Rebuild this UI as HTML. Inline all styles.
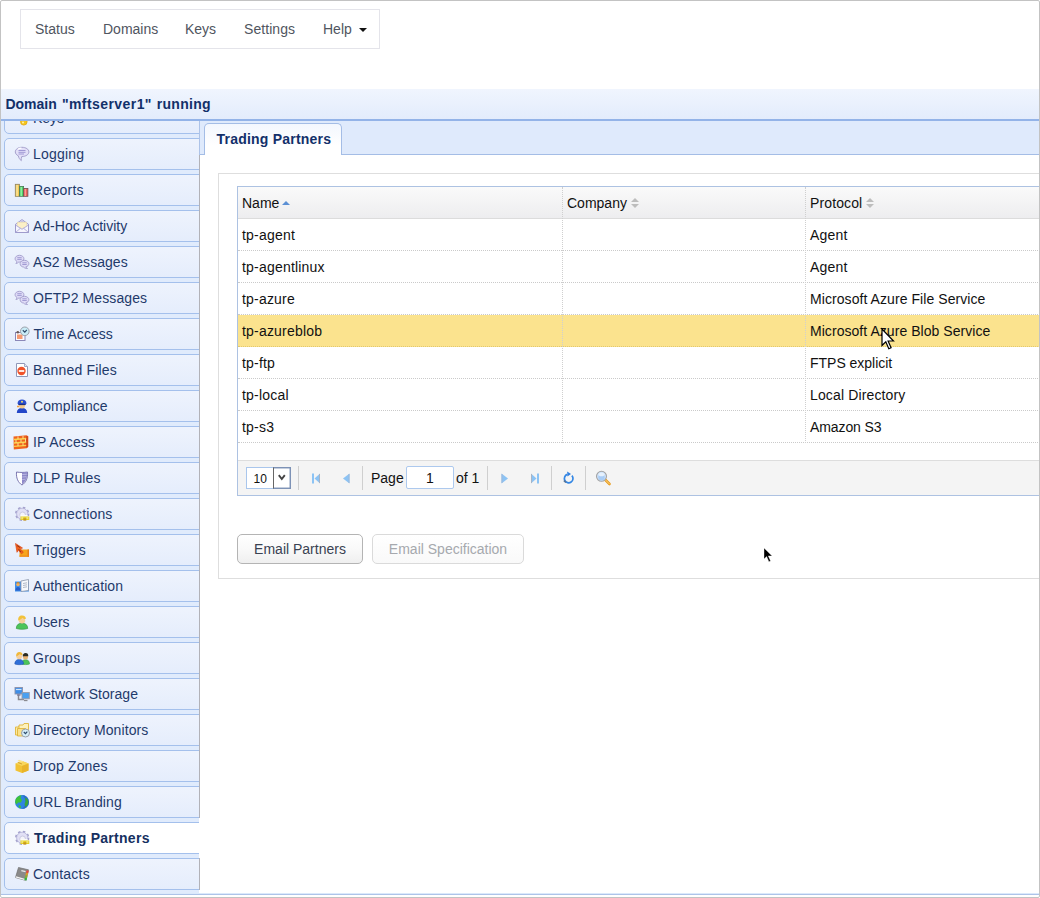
<!DOCTYPE html>
<html lang="en">
<head>
<meta charset="utf-8">
<title>Trading Partners</title>
<style>
*{box-sizing:border-box;margin:0;padding:0}
html,body{width:1040px;height:898px;overflow:hidden;background:#fff}
body{position:relative;font-family:"Liberation Sans",Arial,Helvetica,sans-serif;font-size:14px;line-height:20px;color:#111}
#frame{position:absolute;left:0;top:0;width:1040px;height:898px;border:1px solid #c3c3c3;border-radius:2px;z-index:50;pointer-events:none}
#nav{position:absolute;left:20px;top:9px;width:360px;height:40px;border:1px solid #e4e4ea;background:#fff;white-space:nowrap}
#nav a{position:absolute;top:9px;color:#505560;text-decoration:none;line-height:20px}
#nav .caret{display:inline-block;width:0;height:0;margin-left:3px;vertical-align:middle;border-top:4px solid #111;border-left:4px solid transparent;border-right:4px solid transparent;position:relative;top:-.5px}
#hdr{position:absolute;left:1px;top:89px;width:1038px;height:30px;background:linear-gradient(#f0f5fe,#e3ecfc)}
#hdr span{position:absolute;left:4px;top:5px;font-weight:bold;color:#12306a;line-height:20px;letter-spacing:.38px;white-space:nowrap}
#hline{position:absolute;left:1px;top:119px;width:1038px;height:2px;background:#93b3e8}
#side{position:absolute;left:1px;top:121px;width:198px;height:772px;background:#e0ebfc;overflow:hidden}
.it{position:absolute;left:3px;width:199px;height:32px;border:1px solid #a4c0ec;border-radius:5px 0 0 5px;background:linear-gradient(#eef3fd,#e5edfc);color:#1f3a6b}
.it span{position:absolute;top:5px;line-height:20px;white-space:nowrap}
.ic{position:absolute;overflow:visible}
.it.sel{background:linear-gradient(to right,#f4f7fd,#fff 45%);font-weight:bold;color:#15305f}
#selcover{position:absolute;left:199px;top:823px;width:2px;height:30px;background:#fff}
.vl{position:absolute;left:199px;width:1px}
#strip{position:absolute;left:200px;top:121px;width:839px;height:33px;background:#dfeafc}
#stripline{position:absolute;left:200px;top:154px;width:839px;height:1px;background:#a4bde6}
#tab{position:absolute;left:204px;top:123px;width:138px;height:32px;border:1px solid #a4bde6;border-bottom:0;border-radius:5px 5px 0 0;background:linear-gradient(#f3f7fe,#fff 70%)}
#tab span{position:absolute;left:11.500px;top:5px;font-weight:bold;color:#12306a;line-height:20px;white-space:nowrap;letter-spacing:.22px}
#box{position:absolute;left:218px;top:173px;width:830px;height:406px;border:1px solid #dedede;background:#fff}
#grid{position:absolute;left:237px;top:186px;width:810px;height:310px;border:1px solid #adc2e2;background:#fff}
#ghead{position:absolute;left:0;top:0;width:808px;height:32px;background:linear-gradient(#fafafa,#ededef);border-bottom:1px solid #dcdcdc}
.th{position:absolute;top:6px;line-height:20px;color:#111;white-space:nowrap}
.row{position:absolute;left:0;width:808px;height:32px;border-bottom:1px dotted #cacaca}
.row.hl{background:#fbe38e;border-bottom-color:#e3c96f}
.row span{position:absolute;top:6px;line-height:20px;white-space:nowrap;color:#111}
.c1{left:4px}.c3{left:572px}
.vd{position:absolute;top:0;width:0;height:256px;border-left:1px dotted #cfcfcf}
#pager{position:absolute;left:0;top:273px;width:808px;height:35px;background:#f4f4f4;border-top:1px solid #ddd}
.sep{position:absolute;top:5px;width:1px;height:24px;background:#cfcfcf}
#sel{position:absolute;left:8px;top:6px;width:45px;height:22px;border:1px solid #a9c6ec;background:#fff;font-size:12px;line-height:20px}
#sel span{position:absolute;left:6.500px;top:1px}
#sel i{position:absolute;right:-1px;top:-1px;width:18px;height:22px;border:1px solid #7d92b6;border-left-color:#666;background:#fff;box-shadow:inset -1px 0 0 rgba(125,146,182,.45),inset 0 1px 0 rgba(125,146,182,.45),inset 0 -1px 0 rgba(125,146,182,.45)}
#pg{position:absolute;left:168px;top:5px;width:48px;height:23px;border:1px solid #adc9ee;border-radius:2px;background:#fff;text-align:center;line-height:23px}
.pt{position:absolute;top:7px;line-height:20px;white-space:nowrap}
.btn{position:absolute;top:534px;height:30px;border:1px solid #b4b4b4;border-radius:5px;background:linear-gradient(#fff,#f9f9f9 50%,#efefef);color:#3a4252;text-align:center;line-height:28px;white-space:nowrap}
.btn.dis{color:#a6a9ae;border-color:#dadada;background:linear-gradient(#fff,#f9f9f9)}
#bottomline{position:absolute;left:1px;top:893px;width:1038px;height:2px;background:linear-gradient(#dbe9fb 50%,#adc3e8 50%)}
.cur{position:absolute;overflow:visible;z-index:40}
</style>
</head>
<body>
<div id="nav">
  <a style="left:14px">Status</a>
  <a style="left:82px">Domains</a>
  <a style="left:164px">Keys</a>
  <a style="left:223px;letter-spacing:.06px">Settings</a>
  <a style="left:302px">Help <b class="caret"></b></a>
</div>
<div id="hdr"><span style="left:4.400px;letter-spacing:0">Domain</span> <span style="left:60.900px;letter-spacing:.43px">"mftserver1"</span> <span style="left:155.700px;letter-spacing:.3px">running</span></div>
<div id="side">
<div class="it" style="top:-19px"><svg class="ic" style="left:9px;top:7px" width="16" height="16" viewBox="0 0 16 16"><path d="M12.500 1.500L7 8" stroke="#d9a520" stroke-width="2"/><circle cx="9.800" cy="11.800" r="3.300" fill="#f6c61c" stroke="#e0a818" stroke-width=".8"/><circle cx="9" cy="12.500" r="1" fill="#fdf0b0"/></svg><span style="left:28px;letter-spacing:0px">Keys</span></div>
<div class="it" style="top:17px"><svg class="ic" style="left:9px;top:7px" width="16" height="16" viewBox="0 0 16 16"><path d="M8 1.300C4.200 1.300 1.300 3.300 1.300 5.900c0 1.700 1.200 3.100 3 3.900.3 1.900 1.500 3.700 3 4.900-.2-1.400-.1-2.800.5-4.200H8c3.800 0 6.900-2 6.900-4.600S11.800 1.300 8 1.300z" fill="#e2dff8" stroke="#a6a1cc" stroke-width="1"/><path d="M4 3.300c1-.8 2.300-1.200 3.500-1.200" fill="none" stroke="#fff" stroke-width="1.200"/><path d="M4.500 4.500h7M4.500 6.300h7M4.500 8h5.500" stroke="#a098d4" stroke-width="1"/></svg><span style="left:28px;letter-spacing:0.2px">Logging</span></div>
<div class="it" style="top:53px"><svg class="ic" style="left:9px;top:7px" width="16" height="16" viewBox="0 0 16 16"><rect x="1.300" y="2.300" width="4.200" height="12" fill="#f4c850" stroke="#8a8060" stroke-width=".8"/><rect x="2.300" y="3" width="1.500" height="11" fill="#fbe49a"/><rect x="5.600" y="4.400" width="4" height="9.900" fill="#4fd468" stroke="#4a7a58" stroke-width=".8"/><rect x="6.500" y="5" width="1.500" height="9" fill="#8eeaa0"/><rect x="9.700" y="6.400" width="4.200" height="7.900" fill="#ee5e58" stroke="#6a5050" stroke-width=".8"/><rect x="10.600" y="7" width="1.500" height="7" fill="#f89a96"/></svg><span style="left:28px;letter-spacing:0.25px">Reports</span></div>
<div class="it" style="top:89px"><svg class="ic" style="left:9px;top:7px" width="16" height="16" viewBox="0 0 16 16"><path d="M1.500 6.300L8 1.600l6.500 4.700v8.200h-13z" fill="#eeedfb" stroke="#9f9bcc" stroke-width="1"/><path d="M2 6.300L8 2.200l6 4.100z" fill="#c9c6e6"/><path d="M3.300 4.300h9.400v4.200L8 11 3.300 8.500z" fill="#fcf0c6" stroke="#ead9a0" stroke-width=".5"/><path d="M1.500 7l6.500 4.300L14.500 7v7.500h-13z" fill="#f6f5fd"/><path d="M1.500 7l6.500 4.300L14.500 7M1.500 14.500l5-4.300M14.500 14.500l-5-4.300" fill="none" stroke="#aeaad8" stroke-width=".9"/><path d="M1.500 6.500v8h13v-8" fill="none" stroke="#9f9bcc" stroke-width="1"/></svg><span style="left:28px;letter-spacing:0px">Ad-Hoc Activity</span></div>
<div class="it" style="top:125px"><svg class="ic" style="left:9px;top:7px" width="16" height="16" viewBox="0 0 16 16"><path d="M5.500 1.300c-2.500 0-4.400 1.500-4.400 3.400 0 1.100.7 2.100 1.800 2.700-.1.800-.5 1.500-1 2.100 1.200-.1 2.200-.7 2.900-1.500.2 0 .5.100.7.100 2.500 0 4.400-1.500 4.400-3.400S8 1.300 5.500 1.300z" fill="#dedbf6" stroke="#a19ccb" stroke-width=".9"/><path d="M3.300 3.700h4.400M3.300 5.400h4.400" stroke="#9a93cf" stroke-width=".9"/><path d="M10.500 6.300c2.400 0 4.400 1.500 4.400 3.400 0 1.500-1.300 2.800-3.100 3.200.3.700.9 1.300 1.700 1.600-1.500.2-2.900-.3-3.800-1.400-2-.2-3.600-1.600-3.600-3.400 0-1.900 2-3.400 4.400-3.400z" fill="#dedbf6" stroke="#a19ccb" stroke-width=".9"/><path d="M8.300 8.800h4.400M8.300 10.500h4.400" stroke="#9a93cf" stroke-width=".9"/></svg><span style="left:28px;letter-spacing:0.05px">AS2 Messages</span></div>
<div class="it" style="top:161px"><svg class="ic" style="left:9px;top:7px" width="16" height="16" viewBox="0 0 16 16"><path d="M5.500 1.300c-2.500 0-4.400 1.500-4.400 3.400 0 1.100.7 2.100 1.800 2.700-.1.800-.5 1.500-1 2.100 1.200-.1 2.200-.7 2.900-1.500.2 0 .5.100.7.100 2.500 0 4.400-1.500 4.400-3.400S8 1.300 5.500 1.300z" fill="#dedbf6" stroke="#a19ccb" stroke-width=".9"/><path d="M3.300 3.700h4.400M3.300 5.400h4.400" stroke="#9a93cf" stroke-width=".9"/><path d="M10.500 6.300c2.400 0 4.400 1.500 4.400 3.400 0 1.500-1.300 2.800-3.100 3.200.3.700.9 1.300 1.700 1.600-1.500.2-2.900-.3-3.800-1.400-2-.2-3.600-1.600-3.600-3.400 0-1.900 2-3.400 4.400-3.400z" fill="#dedbf6" stroke="#a19ccb" stroke-width=".9"/><path d="M8.300 8.800h4.400M8.300 10.500h4.400" stroke="#9a93cf" stroke-width=".9"/></svg><span style="left:28px;letter-spacing:0.1px">OFTP2 Messages</span></div>
<div class="it" style="top:197px"><svg class="ic" style="left:9px;top:7px" width="16" height="16" viewBox="0 0 16 16"><rect x="1.500" y="6.500" width="9.500" height="8" fill="#fbfbff" stroke="#8b88b8" stroke-width="1"/><rect x="3" y="8.500" width="5.500" height="4.500" fill="#f59a72"/><circle cx="3.800" cy="6.300" r="1.300" fill="#6a5a58"/><circle cx="10.800" cy="5.300" r="4.300" fill="#c9ecf7" stroke="#9aa0a8" stroke-width="1"/><path d="M8.800 4.300l2 1.800 2-2.300" fill="none" stroke="#2d4a6a" stroke-width="1.200"/></svg><span style="left:28.5px;letter-spacing:0.05px">Time Access</span></div>
<div class="it" style="top:233px"><svg class="ic" style="left:9px;top:7px" width="16" height="16" viewBox="0 0 16 16"><path d="M2.500 1.500h8l3 3v10h-11z" fill="#fff" stroke="#8f97b8" stroke-width="1"/><path d="M10.500 1.500v3h3" fill="#dfe6f6" stroke="#8f97b8" stroke-width=".8"/><circle cx="7.500" cy="9" r="4.200" fill="#f0522a"/><rect x="4.800" y="8" width="5.400" height="2" fill="#fde8e0"/></svg><span style="left:28px;letter-spacing:0.18px">Banned Files</span></div>
<div class="it" style="top:269px"><svg class="ic" style="left:9px;top:7px" width="16" height="16" viewBox="0 0 16 16"><path d="M2.800 15c0-3.200 2-5 5.200-5s5.200 1.800 5.200 5z" fill="#2346c8"/><circle cx="8" cy="7.500" r="3" fill="#f3c98b"/><path d="M3.500 5.500c0-2.500 2-4 4.500-4s4.500 1.500 4.500 4l-1 1.200h-7z" fill="#2a4fd0"/><rect x="4.500" y="5.800" width="7" height="1.300" fill="#1c2f80"/><circle cx="8" cy="3.800" r="1" fill="#f2dc6a"/><path d="M3 8.500l2 0" stroke="#f0a040" stroke-width="1.500"/></svg><span style="left:28px;letter-spacing:0.08px">Compliance</span></div>
<div class="it" style="top:305px"><svg class="ic" style="left:8px;top:7px" width="16" height="16" viewBox="0 0 16 16"><path d="M0.500 2.500l13-1.300 1.800 1v10.500l-1.500 1.500-13 1.300z" fill="#f0641e"/><path d="M1 5.500l13-1M1 9l13-1M1 12.300l13-1" stroke="#fbd24a" stroke-width="1.300"/><path d="M5 2.300v2.800M10 1.800v2.800M3 5.800v3M8 5.300v3M12.500 4.800v3M5 9v3M10 8.500v3" stroke="#fce9a0" stroke-width=".9"/><path d="M14 2.200v11" stroke="#c8401a" stroke-width="1.500"/></svg><span style="left:28px;letter-spacing:0.08px">IP Access</span></div>
<div class="it" style="top:341px"><svg class="ic" style="left:9px;top:7px" width="16" height="16" viewBox="0 0 16 16"><path d="M2.500 2c3.500.6 7.500.6 11 0 .5 6-1.500 10.500-5.500 13C4 12.500 2 8 2.500 2z" fill="#fdfdff" stroke="#7c78b0" stroke-width="1"/><path d="M8 2.500c2 0 4-.1 5.300-.4.300 5.500-1.500 9.600-5.300 12.200z" fill="#8d88c8"/><path d="M8.200 4.500l4.600-.3M8.200 7l4.200-.3M8.200 9.500l3.200-.3" stroke="#c2bfe6" stroke-width=".9"/></svg><span style="left:28px;letter-spacing:0.1px">DLP Rules</span></div>
<div class="it" style="top:377px"><svg class="ic" style="left:9px;top:7px" width="16" height="16" viewBox="0 0 16 16"><circle cx="8.200" cy="7.800" r="6.300" fill="none" stroke="#a3a1cc" stroke-width="1.700" stroke-dasharray="2.470 2.470"/><circle cx="8.200" cy="7.800" r="5.600" fill="#e1e0f5" stroke="#b0aed6" stroke-width=".8"/><circle cx="8.600" cy="8.800" r="2.800" fill="#f4f4fa" stroke="#c2c1da" stroke-width=".8"/><path d="M6.500 9h6.500l2.300 1.700H6.500z" fill="#fbfbf4"/><path d="M6.500 10.500h8.800v3.500H6.500z" fill="#e6d028"/><path d="M7.300 11.300h2v1.500h-2zM12.300 11.300h2v1.500h-2z" fill="#f6ec8a"/><path d="M9.300 12.300h3v2.300h-3z" fill="#c8961a"/></svg><span style="left:28px;letter-spacing:0.15px">Connections</span></div>
<div class="it" style="top:413px"><svg class="ic" style="left:9px;top:7px" width="16" height="16" viewBox="0 0 16 16"><path d="M5.500 7.500h9.500v7.200H5.500z" fill="#f7a51c"/><path d="M13.500 7.500h1.500v7.200h-1.500z" fill="#e5801a"/><path d="M5.500 13.500h9.500v1.200H5.500z" fill="#f08a18"/><path d="M1.500 1.500l7 4.500-2.200.8 3 3.500-1.800 1.500-3-3.500-1.500 2z" fill="#f0601a" stroke="#d8481a" stroke-width=".7"/><path d="M3 3.500l3 2M4.500 7l2.500 3" stroke="#8a2f18" stroke-width=".9"/></svg><span style="left:28.5px;letter-spacing:0.2px">Triggers</span></div>
<div class="it" style="top:449px"><svg class="ic" style="left:9px;top:7px" width="16" height="16" viewBox="0 0 16 16"><path d="M1 3.500h14v10H1z" fill="#3f8ee8"/><path d="M7 3l7.500-1.500v11L7 13.500z" fill="#f7f9fc" stroke="#8a96aa" stroke-width=".8"/><path d="M9 5.500l4-.7M9 7.500l4-.7M9 9.500l4-.7" stroke="#a8b0c0" stroke-width=".9"/><circle cx="4" cy="6.500" r="1.800" fill="#f3b060"/><path d="M1.500 12.500c0-2.200 1-3.500 2.500-3.500s2.500 1.300 2.500 3.500z" fill="#2a5fc8"/><path d="M2.800 4.800h2.500" stroke="#d88820" stroke-width="1.200"/></svg><span style="left:28px;letter-spacing:0.1px">Authentication</span></div>
<div class="it" style="top:485px"><svg class="ic" style="left:9px;top:7px" width="16" height="16" viewBox="0 0 16 16"><path d="M2.300 14.500c0-3.500 2.200-5.300 5.700-5.300s5.700 1.800 5.700 5.300c-3 1-8.400 1-11.400 0z" fill="#4cc45a" stroke="#3a9a48" stroke-width=".7"/><circle cx="8" cy="6.200" r="3.200" fill="#f6cf9a"/><path d="M4.300 6.500c-.5-3 1-5 3.700-5s4 1.500 3.800 3.500c-1.500.3-2.500-.3-3.300-1.300-.8 1.300-2.400 2-4.200 2.800z" fill="#f2c23a"/></svg><span style="left:28px;letter-spacing:0px">Users</span></div>
<div class="it" style="top:521px"><svg class="ic" style="left:9px;top:7px" width="16" height="16" viewBox="0 0 16 16"><path d="M7.500 14c0-2.800 1.500-4.300 4-4.300s4 1.500 4 4.300c-2 .8-6 .8-8 0z" fill="#4cc45a" stroke="#359a44" stroke-width=".6"/><circle cx="11.500" cy="7" r="2.500" fill="#e8b070"/><path d="M8.800 6.500c-.2-2.300 1-3.500 2.800-3.500s2.900 1.200 2.700 3.300c-1.800.2-3.500-.2-5.500.2z" fill="#2a2a22"/><path d="M.8 14c0-3 1.600-4.500 4.400-4.500s4.400 1.500 4.400 4.500c-2.300.9-6.500.9-8.800 0z" fill="#2f6fd8" stroke="#2254b0" stroke-width=".6"/><circle cx="5.200" cy="6.500" r="2.800" fill="#f6cf9a"/><path d="M2.200 6.500c-.4-2.800 1-4.500 3.200-4.500s3.400 1.300 3.200 3.200c-1.300.2-2.200-.3-2.900-1.100-.7 1.100-2 1.700-3.500 2.400z" fill="#f0b83a"/></svg><span style="left:28px;letter-spacing:0.25px">Groups</span></div>
<div class="it" style="top:557px"><svg class="ic" style="left:9px;top:7px" width="16" height="16" viewBox="0 0 16 16"><path d="M4.500 8.500v5h5.500" fill="none" stroke="#8a8a90" stroke-width="1.500"/><rect x="1" y="1.500" width="7.500" height="6.500" fill="#3f8ee8" stroke="#8f92a8" stroke-width=".9"/><path d="M2 3.500h5.500" stroke="#cfe4fb" stroke-width="1.200"/><path d="M3 9h3.500" stroke="#77779a" stroke-width="1.300"/><rect x="8" y="6.500" width="7.300" height="6.300" fill="#4aa0f0" stroke="#9a9ca8" stroke-width=".9"/><path d="M10 14.500h3.500" stroke="#8a8a90" stroke-width="1.300"/></svg><span style="left:28px;letter-spacing:0.05px">Network Storage</span></div>
<div class="it" style="top:593px"><svg class="ic" style="left:9px;top:7px" width="16" height="16" viewBox="0 0 16 16"><path d="M1.500 5h3l1-1.500h4v9.500h-8z" fill="#fbe9a0" stroke="#e0b63a" stroke-width=".9"/><path d="M5 3h4l1-1.500h4.500v11H5z" fill="#fdf1bb" stroke="#e0b63a" stroke-width=".9"/><path d="M3.500 6.500h8v7.500h-8z" fill="#fbe18a" stroke="#dcae30" stroke-width=".8"/><circle cx="11.500" cy="11" r="4" fill="#d6eef8" stroke="#9aa0a8" stroke-width="1"/><path d="M9.800 10l1.700 1.600 1.800-2" fill="none" stroke="#2d4a6a" stroke-width="1.200"/></svg><span style="left:28px;letter-spacing:0.1px">Directory Monitors</span></div>
<div class="it" style="top:629px"><svg class="ic" style="left:9px;top:7px" width="16" height="16" viewBox="0 0 16 16"><path d="M1.500 5.500L8 3l6.500 2.500v7L8 15l-6.500-2.500z" fill="#f2c234"/><path d="M1.500 5.500L8 8l6.500-2.500L8 3z" fill="#f8d65a"/><path d="M8 8v7l6.500-2.500v-7z" fill="#e9b42a"/><path d="M5 1.800l4.500 1.500-2 1.200L3.500 3z" fill="#fbe38a"/><path d="M4 4.500l4 1.500" stroke="#c8962a" stroke-width=".8"/></svg><span style="left:28px;letter-spacing:0.15px">Drop Zones</span></div>
<div class="it" style="top:665px"><svg class="ic" style="left:9px;top:7px" width="16" height="16" viewBox="0 0 16 16"><circle cx="8" cy="8" r="7" fill="#2f86e0"/><path d="M8 1a7 7 0 0 1 0 14 9 9 0 0 0 0-14z" fill="#2a6fc8"/><path d="M2 4.500c1.500-2 3.500-3.200 5.500-3.300L6.500 4l1.500 2-1 2.500H4L2.500 10.500 1.200 8.500c0-1.500.3-2.900.8-4z" fill="#3fc23a"/><path d="M11 3.500l2.500 1.500 1 3-1.300 3.500-1.700 1.500-1-3 1-2.500z" fill="#39a83a"/><path d="M5 11l2 1-.5 2.500-2-1.500z" fill="#3fc23a"/></svg><span style="left:28px;letter-spacing:0.12px">URL Branding</span></div>
<div class="it sel" style="top:701px"><svg class="ic" style="left:9px;top:7px" width="16" height="16" viewBox="0 0 16 16"><circle cx="8.200" cy="7.800" r="6.300" fill="none" stroke="#a3a1cc" stroke-width="1.700" stroke-dasharray="2.470 2.470"/><circle cx="8.200" cy="7.800" r="5.600" fill="#e1e0f5" stroke="#b0aed6" stroke-width=".8"/><circle cx="8.600" cy="8.800" r="2.800" fill="#f4f4fa" stroke="#c2c1da" stroke-width=".8"/><path d="M6.500 9h6.500l2.300 1.700H6.500z" fill="#fbfbf4"/><path d="M6.500 10.500h8.800v3.500H6.500z" fill="#e6d028"/><path d="M7.300 11.300h2v1.500h-2zM12.300 11.300h2v1.500h-2z" fill="#f6ec8a"/><path d="M9.300 12.300h3v2.300h-3z" fill="#c8961a"/></svg><span style="left:29px;letter-spacing:0.28px">Trading Partners</span></div>
<div class="it" style="top:737px"><svg class="ic" style="left:9px;top:7px" width="16" height="16" viewBox="0 0 16 16"><path d="M4.500 1.500l10 2.300-2.500 10.700-10.500-3z" fill="#8a8a8a" stroke="#6e6e6e" stroke-width=".7"/><path d="M1.500 11.500l10.500 3 .3-1.300-10.300-2.900z" fill="#f2f2f2"/><path d="M7.500 4l4.200.9-.3 1.400-4.200-1z" fill="#e8e8e8"/><path d="M12.600 4.300l2.200.5-.6 2.400-2.200-.5z" fill="#e8483a"/><path d="M12 6.800l2.200.5-.6 2.400-2.200-.5z" fill="#d89a2a"/><path d="M11.400 9.300l2.200.5-.6 2.300-2.200-.5z" fill="#8ab02a"/><path d="M10.800 11.700l2.200.5-.5 2.200-2.200-.5z" fill="#2fb83a"/></svg><span style="left:28px;letter-spacing:0.2px">Contacts</span></div>
</div>
<div id="hline"></div>
<div class="vl" style="top:121px;height:34px;background:#adc3e8"></div>
<div class="vl" style="top:155px;height:663px;background:#b2b2b8"></div>
<div class="vl" style="top:858px;height:32px;background:#b2b2b8"></div>
<div id="selcover"></div>
<div id="strip"></div><div id="stripline"></div>
<div id="tab"><span>Trading Partners</span></div>
<div id="box"></div>
<div id="grid">
  <div id="ghead">
    <span class="th" style="left:4px">Name</span>
    <svg class="ic" style="left:44px;top:14px" width="8" height="4" viewBox="0 0 8 4"><path d="M0 4L4 0l4 4z" fill="#5b8fd4"/></svg>
    <span class="th" style="left:329px">Company</span>
    <svg class="ic" style="left:393px;top:11px" width="8" height="10" viewBox="0 0 8 10"><path d="M0 4L4 0l4 4zM0 6h8L4 10z" fill="#bdbdbd"/></svg>
    <span class="th" style="left:572px;letter-spacing:.12px">Protocol</span>
    <svg class="ic" style="left:628px;top:11px" width="8" height="10" viewBox="0 0 8 10"><path d="M0 4L4 0l4 4zM0 6h8L4 10z" fill="#bdbdbd"/></svg>
  </div>
<div class="row" style="top:32px"><span class="c1" style="letter-spacing:0.2px">tp-agent</span><span class="c3" style="letter-spacing:0.2px">Agent</span></div>
<div class="row" style="top:64px"><span class="c1" style="letter-spacing:0.2px">tp-agentlinux</span><span class="c3" style="letter-spacing:0.2px">Agent</span></div>
<div class="row" style="top:96px"><span class="c1" style="letter-spacing:0.2px">tp-azure</span><span class="c3" style="letter-spacing:0.07px">Microsoft Azure File Service</span></div>
<div class="row hl" style="top:128px"><span class="c1" style="letter-spacing:0.2px">tp-azureblob</span><span class="c3" style="letter-spacing:0.05px">Microsoft Azure Blob Service</span></div>
<div class="row" style="top:160px"><span class="c1" style="letter-spacing:0.2px">tp-ftp</span><span class="c3" style="letter-spacing:-0.02px">FTPS explicit</span></div>
<div class="row" style="top:192px"><span class="c1" style="letter-spacing:0.2px">tp-local</span><span class="c3" style="letter-spacing:0.14px">Local Directory</span></div>
<div class="row" style="top:224px"><span class="c1" style="letter-spacing:0.2px">tp-s3</span><span class="c3" style="letter-spacing:-0.1px">Amazon S3</span></div>
  <div class="vd" style="left:324px"></div>
  <div class="vd" style="left:567px"></div>
  <div id="pager">
    <div id="sel"><span>10</span><i><svg class="ic" style="left:4px;top:6px" width="8" height="7" viewBox="0 0 8 7"><path d="M.8 1.200l3 3.800 3-3.800" fill="none" stroke="#444" stroke-width="1.900"/></svg></i></div>
    <div class="sep" style="left:60px"></div>
    <svg class="ic" style="left:73px;top:12px" width="10" height="11" viewBox="0 0 10 11"><path d="M1 .5h2v10H1z" fill="#8cc3f4"/><path d="M9 .5v10L3.500 5.500z" fill="#8cc3f4"/><path d="M8.500 1v9" stroke="#a9b4c4" stroke-width="1"/></svg>
    <svg class="ic" style="left:104px;top:12px" width="8" height="11" viewBox="0 0 8 11"><path d="M7.500 .5v10L1 5.500z" fill="#8cc3f4"/><path d="M7 1v9" stroke="#9fb8d8" stroke-width="1"/></svg>
    <div class="sep" style="left:124px"></div>
    <span class="pt" style="left:133px">Page</span>
    <div id="pg">1</div>
    <span class="pt" style="left:218px">of 1</span>
    <div class="sep" style="left:249px"></div>
    <svg class="ic" style="left:263px;top:12px" width="8" height="11" viewBox="0 0 8 11"><path d="M.5 .5v10L7 5.500z" fill="#8cc3f4"/><path d="M1 1v9" stroke="#9fb8d8" stroke-width="1"/></svg>
    <svg class="ic" style="left:292px;top:12px" width="10" height="11" viewBox="0 0 10 11"><path d="M7 .5h2v10H7z" fill="#8cc3f4"/><path d="M1 .5v10L6.500 5.500z" fill="#8cc3f4"/><path d="M1.500 1v9" stroke="#a9b4c4" stroke-width="1"/></svg>
    <div class="sep" style="left:313px"></div>
    <svg class="ic" style="left:324px;top:8.500px" width="14" height="15" viewBox="0 0 14 15"><path d="M9.900 5.600A4.300 4.300 0 1 1 5.300 4.400" fill="none" stroke="#3487e4" stroke-width="1.700"/><path d="M5.200 1.600l3.800 2.500-3.600 2.400z" fill="#2f7fe0"/><path d="M2 10.500a4.300 4.300 0 0 0 2.200 1.800" fill="none" stroke="#56759a" stroke-width="1.700"/></svg>
    <div class="sep" style="left:347px"></div>
    <svg class="ic" style="left:356.600px;top:8.700px" width="17" height="17" viewBox="0 0 17 17"><path d="M10 9.500l4.500 4.500" stroke="#e89a1a" stroke-width="2.600" stroke-linecap="round"/><path d="M10 9.500l4.500 4.500" stroke="#fbd88a" stroke-width="1" stroke-linecap="round"/><circle cx="6.500" cy="6.300" r="5" fill="#cfe3fb" stroke="#a4a4a4" stroke-width="1.100"/><circle cx="6.500" cy="7.200" r="3.200" fill="#a9cdf6"/><ellipse cx="6.500" cy="4.500" rx="3" ry="1.800" fill="#e6f1fd"/></svg>
  </div>
</div>
<div class="btn" style="left:237px;width:126px">Email Partners</div>
<div class="btn dis" style="left:372px;width:152px">Email Specification</div>
<div id="bottomline"></div>
<svg class="cur" style="left:880.500px;top:327.700px" width="14" height="23" viewBox="0 0 14 23"><path d="M1 1v16.500l3.800-3.700 3 7 2.300-1-3-6.800h5.400z" fill="#fff" stroke="#000" stroke-width="1.200" stroke-linejoin="miter"/></svg>
<svg class="cur" style="left:763px;top:546.800px" width="11" height="16" viewBox="0 0 11 16"><path d="M1 1v11l2.600-2.500 2.300 5.200 1.700-.8-2.300-5h3.800z" fill="#000" stroke="#fff" stroke-opacity=".6" stroke-width=".6"/></svg>
<div id="frame"></div>
</body>
</html>
